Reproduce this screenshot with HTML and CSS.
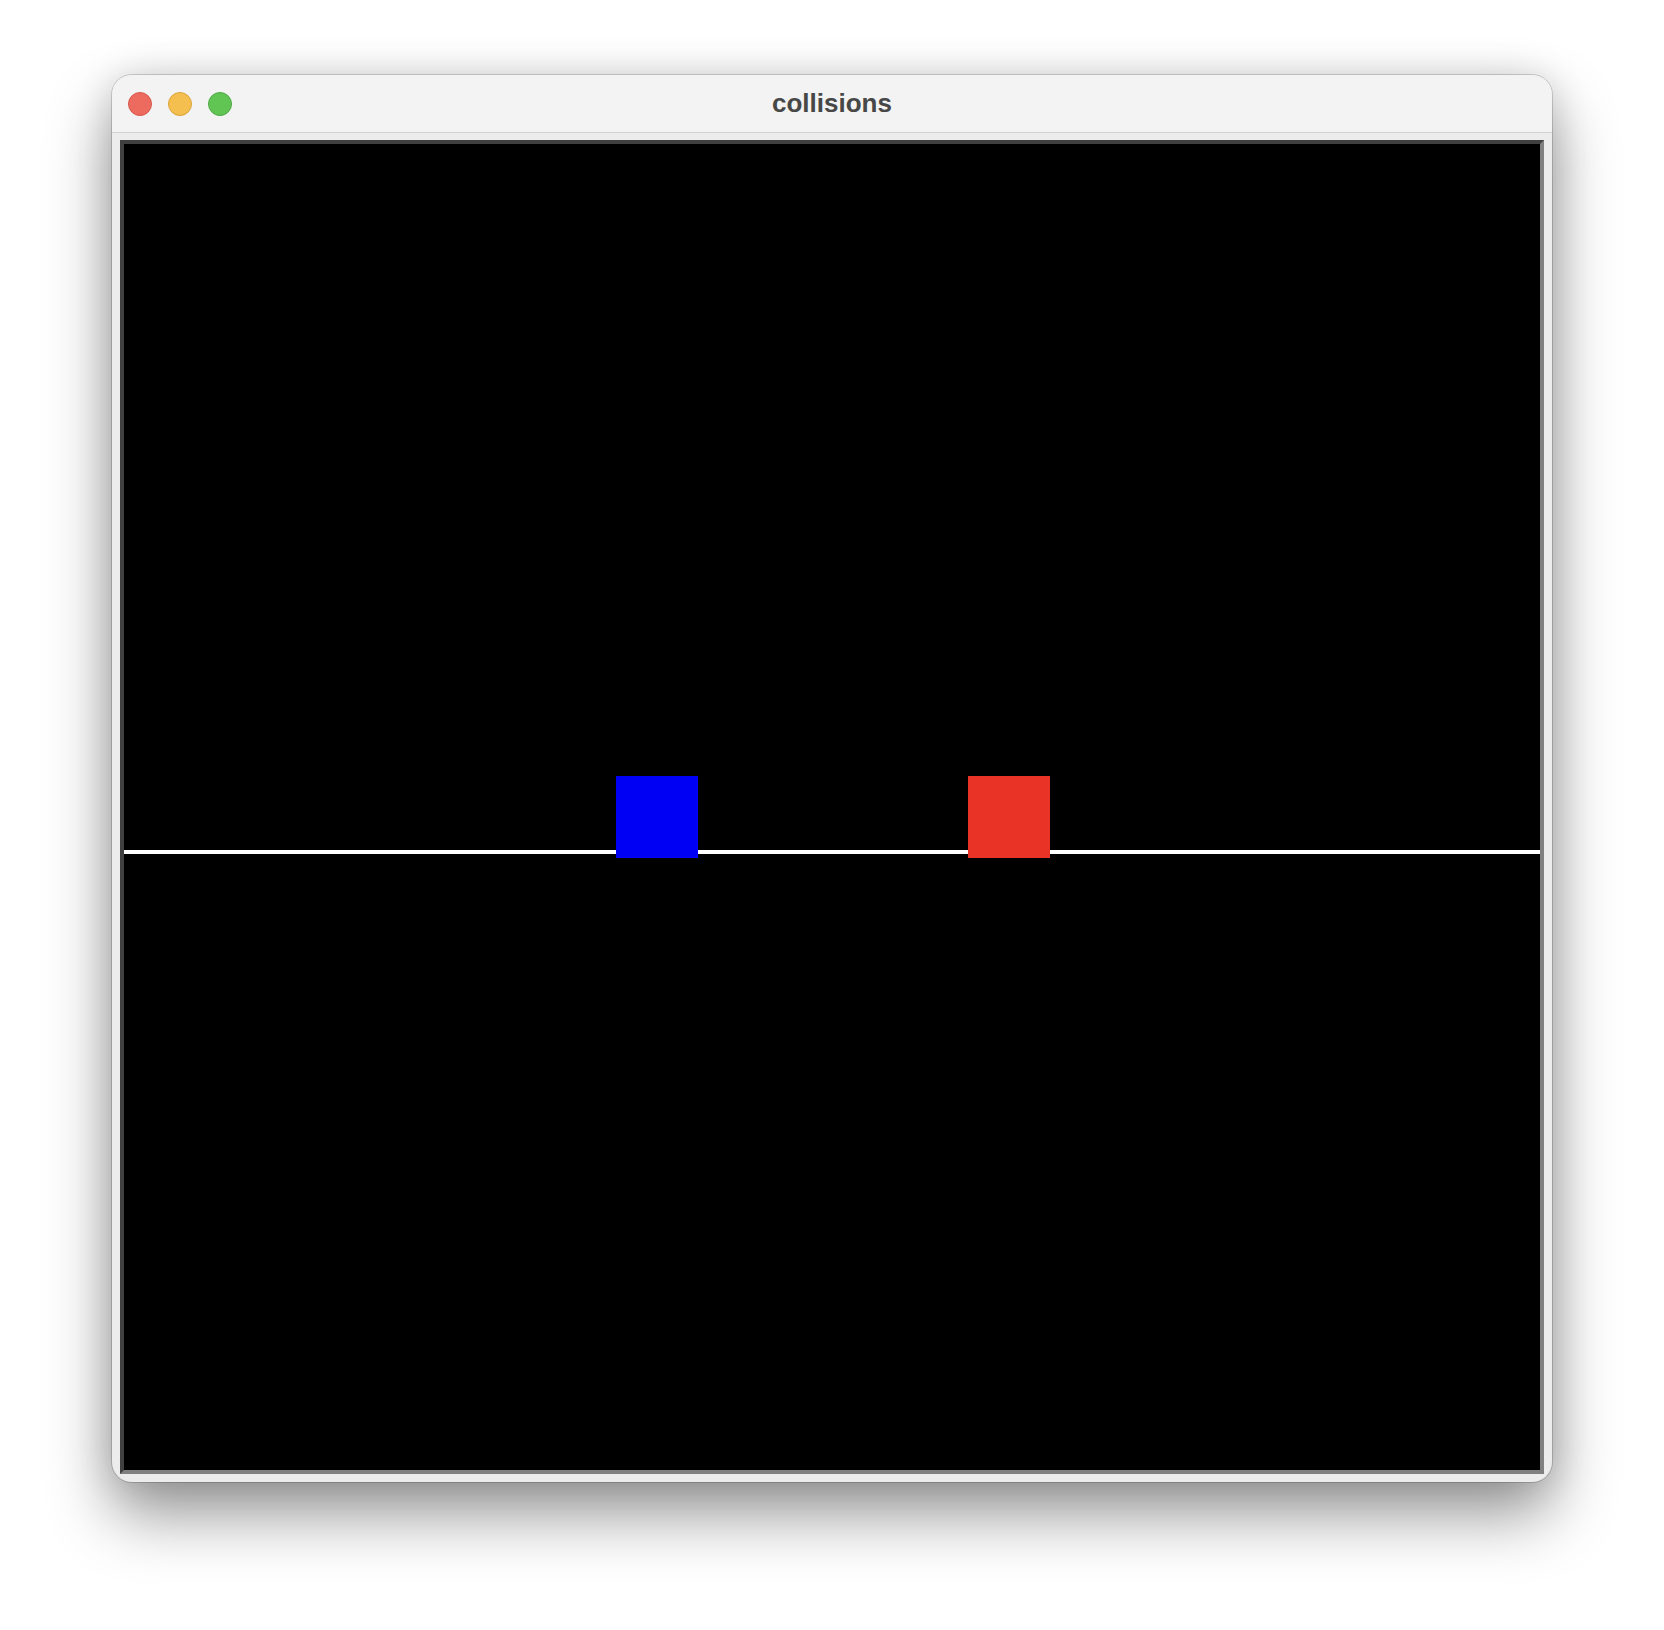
FILE: index.html
```html
<!DOCTYPE html>
<html>
<head>
<meta charset="utf-8">
<link rel="stylesheet" href="styles.css">
</head>
<body>
<div class="window">
  <div class="titlebar">
    <div class="lights">
      <span class="light red"></span>
      <span class="light yellow"></span>
      <span class="light green"></span>
    </div>
    <div class="title">collisions</div>
  </div>
  <div class="content">
    <div class="canvas">
      <div class="ground"></div>
      <div class="box blue"></div>
      <div class="box redbox"></div>
    </div>
  </div>
</div>
</body>
</html>
```
FILE: styles.css
```css
html, body {
  margin: 0;
  padding: 0;
  background: #ffffff;
}
body {
  width: 1664px;
  height: 1630px;
  overflow: hidden;
  padding-top: 75px;
  box-sizing: border-box;
}
.window {
  margin-left: 112px;
  width: 1440px;
  height: 1407px;
  border-radius: 20px;
  background: #ececec;
  box-shadow: 0 0 0 1px rgba(0,0,0,0.16), 0 32px 64px rgba(0,0,0,0.42), 0 0 36px rgba(0,0,0,0.13);
  overflow: hidden;
  display: flex;
  flex-direction: column;
}
.titlebar {
  height: 57px;
  background: #f2f3f2;
  border-bottom: 1px solid #d2d2d2;
  display: flex;
  align-items: center;
  position: relative;
  flex-shrink: 0;
}
.lights {
  display: flex;
  gap: 16px;
  padding-left: 16px;
}
.light {
  width: 24px;
  height: 24px;
  border-radius: 50%;
  box-sizing: border-box;
}
.light.red { background: #ed6a5e; border: 1px solid #d6574b; }
.light.yellow { background: #f5bf4f; border: 1px solid #d9a33a; }
.light.green { background: #61c554; border: 1px solid #4ea944; }
.title {
  position: absolute;
  left: 0;
  right: 0;
  top: 0;
  bottom: 0;
  display: flex;
  align-items: center;
  justify-content: center;
  font-family: "Liberation Sans", Arial, sans-serif;
  font-weight: bold;
  font-size: 26px;
  color: #474747;
}
.content {
  flex: 1;
  padding: 7px 8px 8px 8px;
}
.canvas {
  position: relative;
  width: 1416px;
  height: 1326px;
  background: #000;
  border-style: solid;
  border-width: 4px;
  border-color: #404040 #808080 #808080 #404040;
}
.ground {
  position: absolute;
  left: 0;
  right: 0;
  top: 706px;
  height: 4px;
  background: #ffffff;
}
.box {
  position: absolute;
  top: 632px;
  width: 82px;
  height: 82px;
}
.blue { left: 492px; background: #0000f5; }
.redbox { left: 844px; background: #e83326; }
```
